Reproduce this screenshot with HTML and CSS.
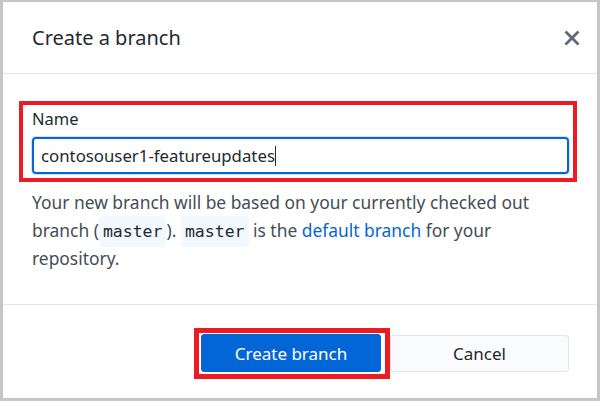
FILE: index.html
```html
<!DOCTYPE html>
<html>
<head>
<meta charset="utf-8">
<link rel="stylesheet" href="styles.css">
</head>
<body>
<div class="window">
  <header class="dialog-header">
    <h1 class="dialog-title">Create a branch</h1>
    <button class="close-btn" aria-label="Close">
      <svg width="16" height="16" viewBox="0 0 16 16"><path d="M1.5 1.5 L14.5 14.5 M14.5 1.5 L1.5 14.5" stroke="#5f6874" stroke-width="2.8" stroke-linecap="butt" fill="none"/></svg>
    </button>
  </header>
  <section class="dialog-body">
    <div class="highlight field-box">
      <label class="field-label">Name</label>
      <div class="text-input">contosouser1-featureupdates<span class="caret"></span></div>
    </div>
    <p class="description">Your new branch will be based on your currently checked out branch (<code class="ref">master</code>). <code class="ref">master</code> is the <a class="link">default branch</a> for your repository.</p>
  </section>
  <footer class="dialog-footer">
    <div class="highlight btn-box">
      <button class="btn btn-primary">Create branch</button>
    </div>
    <button class="btn btn-secondary">Cancel</button>
  </footer>
</div>
</body>
</html>
```
FILE: styles.css
```css
* { box-sizing: border-box; }
html, body { margin: 0; padding: 0; background: #ffffff; }
body { font-family: "Noto Sans", "Open Sans", sans-serif; color: #24292e; }

.window {
  width: 600px;
  height: 401px;
  border-style: solid;
  border-color: #c6c6c6;
  border-width: 2px 3px 3px 3px;
  background: #ffffff;
  display: flex;
  flex-direction: column;
}

.dialog-header {
  height: 72px;
  border-bottom: 1px solid #e1e4e8;
  display: flex;
  align-items: center;
  justify-content: space-between;
  padding: 0 17px 0 29px;
}
.dialog-title {
  margin: 0;
  font-size: 20px;
  font-weight: 400;
  color: #24292e;
}
.close-btn {
  border: 0;
  background: none;
  padding: 0;
  width: 16px;
  height: 16px;
  display: flex;
}

.dialog-body {
  padding: 27px 20px 0 16px;
}
.highlight { border: 4px solid #ed1c24; }
.field-box {
  padding: 0 4px 4px 9px;
}
.field-label {
  display: block;
  font-size: 16.5px;
  line-height: 28px;
  color: #24292e;
  margin-bottom: 4px;
}
.text-input {
  height: 37px;
  border: 2px solid #0366d6;
  border-radius: 4px;
  box-shadow: 0 0 0 1px rgba(3,102,214,0.2);
  padding: 0 7px;
  font-size: 16.8px;
  line-height: 33px;
  color: #24292e;
  display: flex;
  align-items: center;
}
.caret {
  display: inline-block;
  width: 1px;
  height: 20px;
  background: #24292e;
}
.description {
  margin: 6px 0 0 13px;
  font-size: 17.4px;
  line-height: 28px;
  color: #444d56;
  max-width: 535px;
}
.ref {
  font-family: "DejaVu Sans Mono", monospace;
  font-size: 16.5px;
  line-height: 18px;
  background: #f1f8ff;
  border-radius: 4px;
  padding: 6px 4px;
  color: #24292e;
}
.link { color: #0366d6; text-decoration: none; }

.dialog-footer {
  margin-top: auto;
  border-top: 1px solid #e1e4e8;
  padding: 23px 28px 19px 0;
  display: flex;
  justify-content: flex-end;
  align-items: center;
}
.btn-box {
  border-width: 5px;
  padding: 1px 4px 2px 2px;
}
.btn {
  width: 180px;
  height: 38px;
  font-family: inherit;
  font-size: 17px;
  border-radius: 3px;
  padding: 0;
}
.btn-primary {
  background: #0366d6;
  color: #ffffff;
  border: 1px solid #0366d6;
  display: block;
}
.btn-secondary {
  width: 179px;
  background: #fafbfc;
  color: #24292e;
  border: 1px solid #e1e4e8;
  height: 37px;
}
```
